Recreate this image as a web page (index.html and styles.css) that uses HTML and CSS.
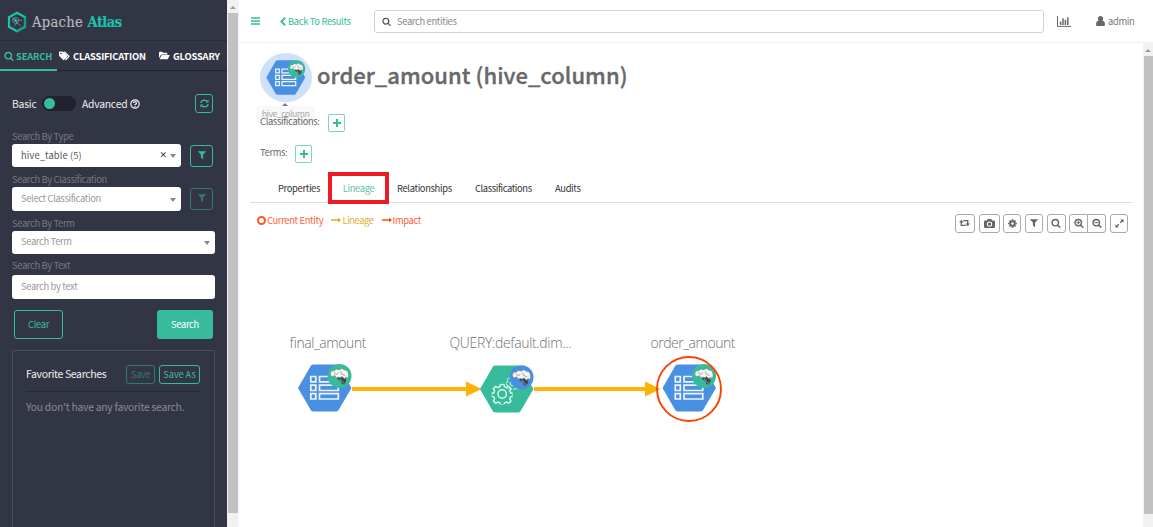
FILE: index.html
```html
<!DOCTYPE html>
<html lang="en">
<head>
<meta charset="utf-8">
<title>Apache Atlas</title>
<link rel="stylesheet" href="styles.css">
</head>
<body>
<svg class="defs" width="0" height="0">
  <symbol id="search" viewBox="0 0 1792 1792"><path fill="currentColor" d="M1216 832q0-185-131.5-316.5t-316.5-131.5-316.5 131.5-131.5 316.5 131.5 316.5 316.5 131.5 316.5-131.5 131.5-316.5zm512 832q0 52-38 90t-90 38q-54 0-90-38l-343-342q-179 124-399 124-143 0-273.5-55.5t-225-150-150-225-55.5-273.5 55.5-273.5 150-225 225-150 273.5-55.5 273.5 55.5 225 150 150 225 55.5 273.5q0 220-124 399l343 343q37 37 37 90z"/></symbol>
  <symbol id="filter" viewBox="0 0 1408 1536"><path fill="currentColor" d="M1403 39q17 41-14 70l-493 493v742q0 42-39 59-13 5-25 5-27 0-45-19l-256-256q-19-19-19-45v-486l-493-493q-31-29-14-70 17-39 59-39h1280q42 0 59 39z"/></symbol>
  <symbol id="hive" viewBox="-10.5 -10 21 20">
    <path d="M-1 1L4 0 6 4 4.500 7.500 2 7 1.500 4.500-2 2.500z" fill="#3f474b"/>
    <path d="M-8-2L-7-4.500-4.500-4.500-3-6 0-5.500 2-6.500 5-5 7-4.500 8-1 7.500 2 5.500 1 4.500 2.500 2 .5 1 1.500-1 1-3 1.500-4-.5-6 .5-7.500 0z" fill="#f4f4f2" stroke="#667a74" stroke-width=".4"/>
    <path d="M-5-3l2 1.500 2-1M1-4l1 2.500 3 1" stroke="#8d9794" stroke-width=".7" fill="none"/>
    <path d="M0 2.500l2.500 2M2.500 5.500l2 1" stroke="#b9c4c0" stroke-width=".6"/>
  </symbol>
  <symbol id="column" viewBox="0 0 54 48">
    <path d="M0 24L13 1.500Q14 .4 15.500 .4H38Q39.500 .4 40.300 1.500L53.500 24 40.300 46.500Q39.500 47.600 38 47.600H15.500Q14 47.600 13 46.500z" fill="#4a90e2"/>
    <path d="M12.800 12.500h5v5.300h-5zM21.500 12.500h18.800v5.300H21.500zM12.800 21.200h5v5.300h-5zM21.500 21.200h18.800v5.300H21.500zM12.800 29.700h5v5.300h-5zM21.500 29.700h18.800v5.300H21.500z" fill="none" stroke="#edf4fd" stroke-width="1.700"/>
    <circle cx="41.500" cy="12" r="12" fill="#37bb9b"/>
    <use href="#hive" x="29.500" y="0" width="24" height="24"/>
  </symbol>
  <symbol id="cog" viewBox="-10 -10 20 20">
    <path d="M-1.800-9.300h3.600l.6 2.300 2 .9 2.300-1.300 2.300 2.400-1.200 2.200.8 2 2.400.7v2.800l-2.400.7-.8 2 1.200 2.200-2.300 2.200-2.300-1.200-2 .8-.6 2.300h-3.600l-.6-2.300-2-.8-2.300 1.200-2.300-2.200 1.200-2.200-.8-2-2.400-.7v-2.800l2.400-.7.8-2-1.200-2.200 2.300-2.400 2.300 1.300 2-.9z" transform="translate(0 -.4) scale(.93)" fill="none" stroke="#d9f6ee" stroke-width="1.500"/>
    <circle r="4" fill="none" stroke="#d9f6ee" stroke-width="1.400"/>
  </symbol>
</svg>

<div class="app">
  <aside class="sidebar">
    <div class="brand">
      <svg width="20" height="22" viewBox="0 0 20 22">
        <path d="M10 1.800L18 6.200v9.600L10 20.200 2 15.800V6.200z" fill="#303443" stroke="#1cc2ad" stroke-width="2.200"/>
        <path d="M18 6.200v9.600L10 20.200" fill="none" stroke="#149b8d" stroke-width="2.200"/>
        <g fill="none" stroke="#8aa5aa" stroke-width=".7"><circle cx="8.500" cy="9.300" r="3"/><path d="M5.500 8l5 4 3 3M7.500 7l2.500 5-3 3.500M11 9.300h4"/></g>
        <circle cx="8.700" cy="9.300" r="1.400" fill="#1cc2ad"/>
      </svg>
      <span class="brand-name">Apache <b>Atlas</b></span>
    </div>
    <nav class="side-tabs">
      <a class="side-tab active"><svg width="10" height="10"><use href="#search"/></svg><span>SEARCH</span></a>
      <a class="side-tab tab-class"><svg width="11" height="10" viewBox="0 0 11 10"><path d="M0 1.200Q0 .4.800.4H3.400Q4 .4 4.600 1L8 4.500Q8.600 5.200 8 5.900L5.200 8.800Q4.500 9.400 3.900 8.800L.5 5.200Q0 4.600 0 4z" fill="#fff"/><path d="M5.300.7L10 5.200 6.500 9" stroke="#fff" stroke-width="1.200" fill="none"/><circle cx="2" cy="2.500" r=".8" fill="#323544"/></svg><span>CLASSIFICATION</span></a>
      <a class="side-tab tab-gloss"><svg width="11" height="9" viewBox="0 0 11 9"><path d="M0 7.200V1.500Q0 .7.800.7H3L4 1.800H7.500Q8.400 1.800 8.400 2.600V3.400H3Q2.200 3.400 1.700 4zM3.200 4.100H10.800L9 7.800Q8.700 8.300 8 8.300H.6L2.200 4.700Q2.500 4.100 3.200 4.100z" fill="#fff"/></svg><span>GLOSSARY</span></a>
    </nav>
    <div class="mode">
      <span class="mode-basic">Basic</span><i class="toggle"></i><span class="mode-adv">Advanced</span>
      <svg width="10" height="10" viewBox="0 0 10 10" fill="none" stroke="#eee"><circle cx="5" cy="5" r="4.200" stroke-width="1.200"/><path d="M3.400 4Q3.600 2.700 5 2.700T6.600 4Q6.600 4.800 5 5.600V6.200M5 6.900V8" stroke-width="1.300"/></svg>
      <button class="outline refresh"><svg width="9" height="9" viewBox="0 0 9 9" fill="none" stroke="currentColor" stroke-width="1.300"><path d="M.9 3.800Q1.500 1.200 4.400 1.100 6.300 1.100 7.600 2.700M8.100 5.200Q7.500 7.900 4.600 7.900 2.700 7.900 1.400 6.300"/><path d="M8.600.6V3.600H5.600zM.4 8.400V5.400H3.400z" fill="currentColor" stroke="none"/></svg></button>
    </div>
    <label class="lbl">Search By Type</label>
    <div class="row"><div class="select dark"><span>hive_table (5)</span><b class="clear-x">×</b><i class="caret"></i></div><button class="outline filter"><svg width="8" height="9"><use href="#filter"/></svg></button></div>
    <label class="lbl">Search By Classification</label>
    <div class="row"><div class="select"><span>Select Classification</span><i class="caret"></i></div><button class="outline filter off"><svg width="8" height="9"><use href="#filter"/></svg></button></div>
    <label class="lbl">Search By Term</label>
    <div class="row"><div class="select"><span>Search Term</span><i class="caret"></i></div></div>
    <label class="lbl lbl-text">Search By Text</label>
    <div class="row"><div class="select"><span>Search by text</span></div></div>
    <div class="actions"><button class="outline clear">Clear</button><button class="solid">Search</button></div>
    <section class="fav">
      <div class="fav-head"><span class="fav-title">Favorite Searches</span><button class="outline save off">Save</button><button class="outline save-as">Save As</button></div>
      <p class="fav-empty">You don't have any favorite search.</p>
    </section>
  </aside>
  <div class="scroll left-scroll"><i class="arrow"></i><i class="thumb"></i></div>

  <main class="main">
    <header class="topbar">
      <svg class="burger" width="9" height="8" viewBox="0 0 9 8"><path d="M0 1H9M0 4H9M0 7H9" stroke="#37bb9b" stroke-width="1.400"/></svg>
      <a class="back"><svg width="6" height="9" viewBox="0 0 6 9"><path d="M5.200.6L1.400 4.500 5.200 8.400" fill="none" stroke="currentColor" stroke-width="1.900"/></svg><span>Back To Results</span></a>
      <div class="global-search"><svg width="9" height="9"><use href="#search"/></svg><span>Search entities</span></div>
      <svg class="stats" width="14" height="11" viewBox="0 0 14 11"><path d="M.5 0V10.400H14" fill="none" stroke="#686868" stroke-width="1"/><path d="M3.600 9V5.500M6 9V2.200M8.400 9V3.800M10.800 9V1.200" stroke="#686868" stroke-width="1.500"/></svg>
      <svg class="person" width="9" height="10" viewBox="0 0 9 10"><path d="M4.500 0A2.500 2.600 0 0 1 6.300 4.500Q9 5 9 8.500 9 10 7.700 10H1.300Q0 10 0 8.500 0 5 2.700 4.500A2.500 2.600 0 0 1 4.500 0z" fill="#686868"/></svg>
      <span class="user">admin</span>
    </header>
    <div class="body">
      <div class="content">
        <div class="title-row">
          <div class="entity-icon"><svg width="40" height="35"><use href="#column"/></svg><div class="tip">hive_column</div></div>
          <h1>order_amount (hive_column)</h1>
        </div>
        <div class="meta"><span class="m1">Classifications:</span><button class="plus"></button></div>
        <div class="meta meta-terms"><span class="m2">Terms:</span><button class="plus"></button></div>
        <nav class="tabs"><a class="t1">Properties</a><a class="current">Lineage</a><a class="t3">Relationships</a><a class="t4">Classifications</a><a class="t5">Audits</a></nav>
        <div class="lineage-bar">
          <i class="ring"></i><span class="lg-current">Current Entity</span>
          <svg width="10" height="6" viewBox="0 0 10 6"><path d="M0 3H8" stroke="#e5a50f" stroke-width="1.400"/><path d="M7 .8L10 3 7 5.200z" fill="#e5a50f"/></svg><span class="lg-line">Lineage</span>
          <svg width="10" height="6" viewBox="0 0 10 6"><path d="M0 3H8" stroke="#fb4200" stroke-width="1.400"/><path d="M7 .8L10 3 7 5.200z" fill="#fb4200"/></svg><span class="lg-impact">Impact</span>
          <div class="tools">
            <button class="w20"><svg width="11" height="8" viewBox="0 0 11 8"><path d="M6.800 6.400H2.300V2.500M4.200 1.600H8.700V5.500" fill="none" stroke="currentColor" stroke-width="1.400"/><path d="M0 3.500L2.300.8 4.600 3.500zM6.400 4.500L8.700 7.200 11 4.500z" fill="currentColor"/></svg></button>
            <button class="w21"><svg width="11" height="9" viewBox="0 0 11 9"><path fill-rule="evenodd" d="M1.200 1.400H3L3.700 0H7.300L8 1.400H9.800Q11 1.400 11 2.600V7.800Q11 9 9.800 9H1.200Q0 9 0 7.800V2.600Q0 1.400 1.200 1.400zM5.500 2.400A2.700 2.700 0 1 0 5.500 7.800 2.700 2.700 0 1 0 5.500 2.400zM5.500 3.400A1.700 1.700 0 1 1 5.500 6.800 1.700 1.700 0 1 1 5.500 3.400z" fill="currentColor"/></svg></button>
            <button class="w18"><svg width="9" height="9" viewBox="-4.500 -4.500 9 9"><circle r="2.300" fill="none" stroke="currentColor" stroke-width="1.900"/><path d="M0-4.400V-3M0 4.400V3M-4.400 0H-3M4.400 0H3M-3-3L-2.200-2.200M3-3L2.200-2.200M-3 3L-2.200 2.200M3 3L2.200 2.200" stroke="currentColor" stroke-width="1.700"/></svg></button>
            <button class="w18"><svg width="8" height="9"><use href="#filter"/></svg></button>
            <button class="w19"><svg width="10" height="10"><use href="#search"/></svg></button>
            <div class="group"><button class="w18"><svg width="10" height="10" viewBox="0 0 9 9"><use href="#search" width="9" height="9"/><path d="M2.300 4.200H5.500M3.900 2.600V5.800" stroke="currentColor" stroke-width=".9"/></svg></button><button class="w18"><svg width="10" height="10" viewBox="0 0 9 9"><use href="#search" width="9" height="9"/><path d="M2.300 4.200H5.500" stroke="currentColor" stroke-width=".9"/></svg></button></div>
            <button class="w18"><svg width="9" height="9" viewBox="0 0 9 9"><path d="M1.500 7.500L3.900 5.100M5.100 3.900L7.500 1.500" stroke="currentColor" stroke-width="1.300"/><path d="M5.200.4H8.600V3.800zM.4 5.200V8.600H3.800z" fill="currentColor"/></svg></button>
          </div>
        </div>
        <svg class="graph" width="883" height="290" viewBox="250 237 883 290">
          <g fill="#ffb108"><path d="M352 387H468V391H352zM466 381.500L481.500 389 466 396.500z"/><path d="M534 387H647V391H534zM645 381.500L660.500 389 645 396.500z"/></g>
          <use href="#column" x="298" y="364" width="54" height="48"/>
          <path d="M480 389L493 366.500Q494 365.400 495.500 365.400H518Q519.500 365.400 520.300 366.500L533.500 389 520.300 411.500Q519.500 412.600 518 412.600H495.500Q494 412.600 493 411.500z" fill="#37bb9b"/>
          <use href="#cog" x="506" y="376" width="14" height="14"/>
          <use href="#cog" x="491.700" y="383.500" width="21" height="21"/>
          <circle cx="521.500" cy="377.300" r="12" fill="#4a90e2"/>
          <use href="#hive" x="509.500" y="365.300" width="24" height="24"/>
          <use href="#column" x="662.500" y="364" width="54" height="48"/>
          <circle cx="689" cy="389" r="32" fill="none" stroke="#fb4200" stroke-width="1.900"/>
          <g class="node-names"><text x="289" y="347.500" textLength="77">final_amount</text><text x="449.500" y="347.500" textLength="122">QUERY:default.dim...</text><text x="650.500" y="347.500" textLength="85">order_amount</text></g>
        </svg>
      </div>
      <div class="scroll right-scroll"><i class="arrow"></i><i class="thumb"></i></div>
    </div>
  </main>
</div>
</body>
</html>
```
FILE: styles.css
```css
* { box-sizing: border-box; }
body { margin: 0; font: 9.4px/14px "Noto Sans CJK SC", "Open Sans", sans-serif; letter-spacing: -.35px; color: #686868; background: #fff; }
svg { display: block; flex: none; }
span, a, h1, label { white-space: nowrap; }
button { display: flex; align-items: center; justify-content: center; padding: 0; margin: 0; font: inherit; letter-spacing: inherit; background: transparent; flex: none; }
.defs { position: absolute; }
.app { display: flex; width: 1153px; height: 527px; overflow: hidden; }

.sidebar { width: 227px; flex: none; background: #323544; overflow: hidden; }
.brand { height: 41px; display: flex; align-items: center; padding: 3px 0 0 7px; gap: 5px; border-bottom: 1px solid #282b38; }
.brand-name { font: 14.6px/20px "DejaVu Serif", serif; font-stretch: condensed; color: #b6b7ba; letter-spacing: .3px; -webkit-text-stroke: .2px; }
.brand-name b { color: #1cc2ad; font-weight: 700; letter-spacing: -.6px; }
.side-tabs { display: flex; height: 30px; border-bottom: 1px solid #222531; font-weight: 700; letter-spacing: -.18px; color: #fff; }
.side-tab { display: flex; align-items: center; gap: 3px; height: 29px; padding-left: 4px; }
.side-tab.active { width: 57px; height: 30px; gap: 2px; color: #37bb9b; border-bottom: 2px solid #37bb9b; padding-top: 1px; }
.tab-class { width: 98px; padding-left: 2px; }
.mode { display: flex; align-items: center; height: 19px; margin: 23px 14px 0 12px; color: #eee; font-size: 10.300px; letter-spacing: -.2px; }
.mode-basic { width: 30px; }
.toggle { width: 34px; height: 15px; border-radius: 8px; background: #20222e; padding: 2px; }
.toggle::before { content: ""; display: block; width: 11px; height: 11px; border-radius: 50%; background: #37bb9b; }
.mode-adv { width: 48px; margin-left: 6px; }
.outline { border: 1px solid #37bb9b; border-radius: 3px; color: #37bb9b; }
.outline.off { opacity: .5; }
.refresh { width: 18px; height: 19px; margin-left: auto; }
.lbl { display: block; margin: 0 0 0 12px; height: 20px; padding-top: 5px; color: #777880; font-size: 9.4px; }
.mode + .lbl { height: 31px; padding-top: 16px; }
.lbl-text { height: 21.500px; padding-top: 4px; }
.row { display: flex; margin: 0 12px; gap: 9px; align-items: center; }
.select { flex: 1; height: 23.300px; background: #fff; border-radius: 3px; display: flex; align-items: center; padding: 0 5px 1.500px 9px; color: #999; }
.select.dark { color: #555; }
.select.dark span { letter-spacing: .1px; }
.caret { margin-left: auto; margin-top: 3px; border: 3px solid transparent; border-top: 4px solid #888; border-bottom: 0; }
.clear-x { margin-left: auto; color: #333; font-size: 8px; margin-right: 3px; }
.clear-x + .caret { margin-left: 0; }
.filter { width: 23px; height: 22px; margin-right: 2px; }
.actions { display: flex; justify-content: space-between; margin: 11px 14px 11.500px; }
.actions button { padding-bottom: 1px; }
.clear { width: 49px; height: 29px; }
.solid { width: 56px; height: 29px; border: 0; border-radius: 3px; background: #37bb9b; color: #fff; }
.fav { margin: 0 12px; height: 190px; border: 1px solid #4c4e58; border-radius: 2px; padding: 13px; }
.fav-head { display: flex; align-items: center; height: 28px; padding-bottom: 7px; border-bottom: 1px solid #262936; }
.fav-title { color: #eee; font-size: 10.500px; width: 100px; }
.save { width: 29px; height: 19px; margin-right: 4px; }
.save-as { width: 41px; height: 19px; letter-spacing: -.15px; }
.fav-empty { margin: 8px 0; color: #8a8b90; font-size: 10.300px; letter-spacing: -.23px; white-space: nowrap; }

.scroll { background: #f1f1f1; display: flex; flex-direction: column; align-items: center; }
.scroll .arrow { height: 13px; padding-top: 6px; }
.arrow::before { content: ""; display: block; border: 3px solid transparent; border-top: 0; border-bottom: 3px solid #999; }
.thumb { background: #c1c1c1; }
.left-scroll { width: 12px; flex: none; border-right: 1px solid #f6f6f6; }
.left-scroll .thumb { width: 10px; height: 500px; }
.right-scroll { width: 10px; flex: none; }
.right-scroll .thumb { width: 9px; height: 458px; }

.main { flex: 1; min-width: 0; }
.topbar { display: flex; align-items: center; height: 43px; border-bottom: 1px solid #f0f0f0; padding-left: 12px; }
.back { display: flex; align-items: center; gap: 2px; width: 94px; margin-left: 20px; color: #37bb9b; }
.global-search { width: 670px; height: 23px; border: 1px solid #d3d3d3; border-radius: 3px; display: flex; align-items: center; gap: 6px; padding-left: 7px; color: #888; }
.global-search svg { color: #555; }
.stats { margin-left: 13px; }
.person { margin-left: 25px; margin-right: 3px; }
.user { color: #777; }
.body { display: flex; height: 484px; }
.content { width: 904px; padding: 10px 11px 0; overflow: hidden; }
.title-row { display: flex; padding-left: 10px; height: 58px; }
.entity-icon { position: relative; width: 52px; height: 49px; border-radius: 50%; background: #cfe0fb; display: flex; align-items: center; justify-content: center; }
.tip { position: absolute; left: -4px; top: 53px; width: 59px; height: 17px; border-radius: 3px; background: #f8f8f8; text-align: center; line-height: 16px; font-size: 8.800px; letter-spacing: -.5px; color: #aaa; }
.tip::before { content: ""; position: absolute; left: 26px; top: -3px; border: 3.500px solid transparent; border-top: 0; border-bottom: 3px solid #777; }
h1 { margin: 8px 0 0 5px; font-size: 22px; line-height: 27px; font-weight: 500; letter-spacing: .05px; -webkit-text-stroke: .35px; color: #686868; }
.meta { display: flex; align-items: center; height: 23px; padding-left: 10px; }
.meta-terms { margin-top: 8px; }
.meta span { padding-bottom: 3px; position: relative; }
.m1 { width: 68px; }
.m2 { width: 35px; }
.plus { width: 17px; height: 18px; border: 1px solid #7dd3bf; border-radius: 2px; background: #fff; }
.plus::before { content: ""; width: 8px; height: 8px; background: linear-gradient(#37bb9b, #37bb9b) center/8px 2px no-repeat, linear-gradient(#37bb9b, #37bb9b) center/2px 8px no-repeat; }
.tabs { display: flex; align-items: center; height: 38px; border-bottom: 1px solid #ddd; color: #333; letter-spacing: -.35px; padding: 9px 0 0 28px; }
.tabs a { display: block; }
.t1 { width: 50px; }
.tabs .current { width: 61px; height: 32px; flex: none; border: 4px solid #ed1c24; color: #5cc6ac; text-align: center; line-height: 24px; margin-right: 8px; }
.t3 { width: 78px; }
.t4 { width: 80px; letter-spacing: -.4px; }
.lineage-bar { display: flex; align-items: center; height: 34px; padding-left: 7px; padding-right: 4px; }
.ring { width: 9px; height: 9px; border: 2px solid #fb5a22; border-radius: 50%; }
.lg-current { width: 63.500px; margin-left: 1px; margin-right: 0; color: #fb6236; }
.lg-line { width: 39px; margin-left: 2px; letter-spacing: -.45px; color: #dfac35; }
.lg-impact { margin-left: 1px; color: #fb6236; }
.tools { display: flex; margin-left: auto; margin-top: 6px; gap: 3.700px; }
.tools button { height: 19px; border: 1px solid #aaa; border-radius: 3px; color: #666; }
.group { display: flex; }
.tools .group button + button { border-left: 0; border-radius: 0 3px 3px 0; }
.tools .group button:first-child { border-radius: 3px 0 0 3px; width: 19px; }
.w18 { width: 18px; }
.w19 { width: 19px; }
.w20 { width: 20px; }
.w21 { width: 21px; }
.node-names { font: 300 14px "Open Sans", sans-serif; letter-spacing: 0; fill: #707070; }
```
